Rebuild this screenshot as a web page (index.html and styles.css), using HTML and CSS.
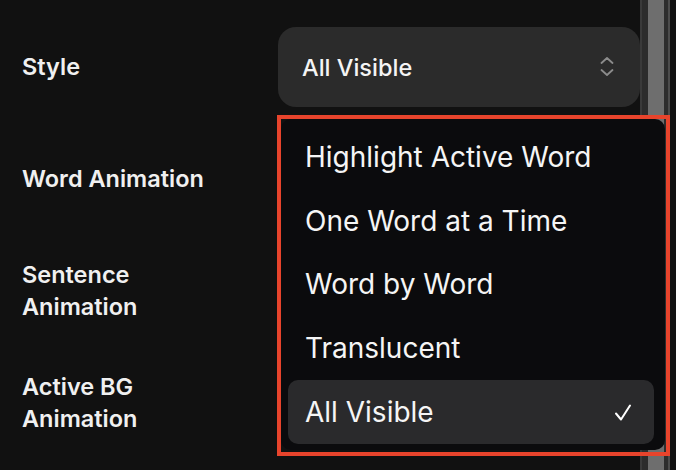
FILE: index.html
```html
<!DOCTYPE html>
<html>
<head>
<meta charset="utf-8">
<link rel="stylesheet" href="styles.css">
</head>
<body>
<div class="app">
  <div class="panel">
    <div class="row">
      <div class="label">Style</div>
      <div class="select">
        <span class="select-value">All Visible</span>
        <svg class="chevrons" width="14" height="20" viewBox="0 0 14 20">
          <polyline points="1.5,6 7,1 12.5,6" fill="none" stroke="#8c8c8c" stroke-width="1.8" stroke-linecap="round" stroke-linejoin="round"/>
          <polyline points="1.5,13 7,18 12.5,13" fill="none" stroke="#8c8c8c" stroke-width="1.8" stroke-linecap="round" stroke-linejoin="round"/>
        </svg>
      </div>
    </div>
    <div class="row">
      <div class="label">Word Animation</div>
      <div class="select"></div>
    </div>
    <div class="row">
      <div class="label">Sentence<br>Animation</div>
      <div class="select"></div>
    </div>
    <div class="row">
      <div class="label">Active BG<br>Animation</div>
      <div class="select"></div>
    </div>
  </div>
  <div class="scrollbar">
    <div class="sb-edge"></div>
    <div class="sb-track"></div>
    <div class="sb-thumb"></div>
    <div class="sb-track2"></div>
    <div class="sb-line"></div>
  </div>

  <div class="menu">
    <div class="item">Highlight Active Word</div>
    <div class="item">One Word at a Time</div>
    <div class="item">Word by Word</div>
    <div class="item">Translucent</div>
    <div class="item selected">
      <span>All Visible</span>
      <svg class="check" width="18" height="19" viewBox="0 0 18 19">
        <polyline points="2,10.5 7,16.5 16,2.5" fill="none" stroke="#ffffff" stroke-width="2" stroke-linecap="round" stroke-linejoin="round"/>
      </svg>
    </div>
  </div>
  <div class="annotation"></div>
</div>
</body>
</html>
```

FILE: styles.css
```css
* { box-sizing: border-box; }
html, body {
  margin: 0;
  padding: 0;
  background: #111111;
  width: 676px;
  height: 470px;
  overflow: hidden;
  font-family: Inter, "Noto Sans", sans-serif;
  color: #f2f2f2;
}
.app {
  position: relative;
  display: flex;
  width: 676px;
  height: 470px;
}
.panel {
  width: 640px;
  padding: 27px 0 0 22px;
  display: flex;
  flex-direction: column;
  gap: 32px;
}
.row {
  display: flex;
  align-items: center;
  height: 80px;
}
.label {
  width: 256px;
  font-size: 23.5px;
  font-weight: 600;
  line-height: 32px;
  color: #f0f0f0;
}
.select {
  flex: 1;
  height: 80px;
  background: #2b2b2b;
  border-radius: 18px;
  display: flex;
  align-items: center;
  justify-content: space-between;
  padding: 0 26px 0 24px;
}
.select-value {
  font-size: 23.5px;
  font-weight: 500;
  color: #f4f4f4;
}
.chevrons { display: block; }
.scrollbar {
  width: 36px;
  display: flex;
}
.sb-edge { width: 2px; background: #3a3a3a; }
.sb-track { width: 6px; background: #2c2c2c; }
.sb-thumb { width: 16px; background: #6e6e6e; }
.sb-track2 { width: 4px; background: #2d2d2d; }
.sb-line { width: 2px; background: #4c4c4c; }

.menu {
  position: absolute;
  left: 281px;
  top: 119px;
  width: 384px;
  height: 331px;
  background: #0b0b0d;
  border-radius: 10px;
  padding: 6px 11px 6px 7px;
  display: flex;
  flex-direction: column;
}
.item {
  height: 64px;
  display: flex;
  align-items: center;
  justify-content: space-between;
  padding: 0 22px 0 17px;
  font-size: 28px;
  font-weight: 400;
  color: #f5f5f5;
  border-radius: 10px;
}
.item.selected {
  background: #2a2a2c;
}
.check { display: block; }
.annotation {
  position: absolute;
  left: 277px;
  top: 115px;
  width: 393px;
  height: 341px;
  border: 4px solid #e8442c;
  pointer-events: none;
}
```
